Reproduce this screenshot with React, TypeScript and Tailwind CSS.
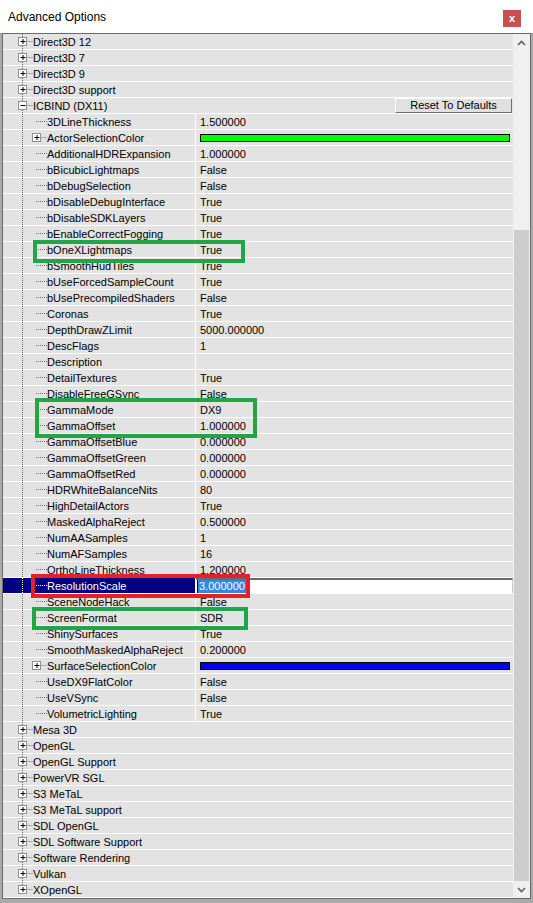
import React from "react";

type Item = {
  label: string;
  value?: string;
  swatch?: "green" | "blue";
  expandable?: boolean;
  selected?: boolean;
};

const before = ["Direct3D 12", "Direct3D 7", "Direct3D 9", "Direct3D support"];
const after = [
  "Mesa 3D",
  "OpenGL",
  "OpenGL Support",
  "PowerVR SGL",
  "S3 MeTaL",
  "S3 MeTaL support",
  "SDL OpenGL",
  "SDL Software Support",
  "Software Rendering",
  "Vulkan",
  "XOpenGL",
];

const props: Item[] = [
  { label: "3DLineThickness", value: "1.500000" },
  { label: "ActorSelectionColor", swatch: "green", expandable: true },
  { label: "AdditionalHDRExpansion", value: "1.000000" },
  { label: "bBicubicLightmaps", value: "False" },
  { label: "bDebugSelection", value: "False" },
  { label: "bDisableDebugInterface", value: "True" },
  { label: "bDisableSDKLayers", value: "True" },
  { label: "bEnableCorrectFogging", value: "True" },
  { label: "bOneXLightmaps", value: "True" },
  { label: "bSmoothHudTiles", value: "True" },
  { label: "bUseForcedSampleCount", value: "True" },
  { label: "bUsePrecompiledShaders", value: "False" },
  { label: "Coronas", value: "True" },
  { label: "DepthDrawZLimit", value: "5000.000000" },
  { label: "DescFlags", value: "1" },
  { label: "Description", value: "" },
  { label: "DetailTextures", value: "True" },
  { label: "DisableFreeGSync", value: "False" },
  { label: "GammaMode", value: "DX9" },
  { label: "GammaOffset", value: "1.000000" },
  { label: "GammaOffsetBlue", value: "0.000000" },
  { label: "GammaOffsetGreen", value: "0.000000" },
  { label: "GammaOffsetRed", value: "0.000000" },
  { label: "HDRWhiteBalanceNits", value: "80" },
  { label: "HighDetailActors", value: "True" },
  { label: "MaskedAlphaReject", value: "0.500000" },
  { label: "NumAASamples", value: "1" },
  { label: "NumAFSamples", value: "16" },
  { label: "OrthoLineThickness", value: "1.200000" },
  { label: "ResolutionScale", value: "3.000000", selected: true },
  { label: "SceneNodeHack", value: "False" },
  { label: "ScreenFormat", value: "SDR" },
  { label: "ShinySurfaces", value: "True" },
  { label: "SmoothMaskedAlphaReject", value: "0.200000" },
  { label: "SurfaceSelectionColor", swatch: "blue", expandable: true },
  { label: "UseDX9FlatColor", value: "False" },
  { label: "UseVSync", value: "False" },
  { label: "VolumetricLighting", value: "True" },
];

// little +/- box used by the tree
function Box({ x, open, dot }: { x: number; open?: boolean; dot: string }) {
  const cx = x + 4;
  return (
    <g>
      <rect x={x} y={3.5} width={8} height={8} fill="#fff" stroke="#919191" />
      <line x1={cx - 2} y1={7.5} x2={cx + 3} y2={7.5} stroke="#000" />
      {!open && <line x1={cx + 0.5} y1={5} x2={cx + 0.5} y2={10} stroke="#000" />}
      <line x1={x + 9} y1={7.5} x2={x + 14} y2={7.5} stroke={dot} strokeDasharray="1 1" />
    </g>
  );
}

function Glyph({
  level,
  box,
  last,
  selected,
}: {
  level: 0 | 1;
  box?: "plus" | "minus";
  last?: boolean;
  selected?: boolean;
}) {
  const dot = selected ? "#ffffff" : "#6e6e6e";
  if (level === 0) {
    return (
      <svg width={30} height={15} className="shrink-0">
        <line x1={19.5} y1={0} x2={19.5} y2={3} stroke={dot} strokeDasharray="1 1" />
        {!last && <line x1={19.5} y1={12} x2={19.5} y2={16} stroke={dot} strokeDasharray="1 1" />}
        <Box x={15.5} open={box === "minus"} dot={dot} />
      </svg>
    );
  }
  return (
    <svg width={44} height={15} className="shrink-0">
      <line x1={19.5} y1={0} x2={19.5} y2={16} stroke={dot} strokeDasharray="1 1" />
      {box ? (
        <Box x={29.5} dot={dot} />
      ) : (
        <line x1={33} y1={7.5} x2={44} y2={7.5} stroke={dot} strokeDasharray="1 1" />
      )}
    </svg>
  );
}

function GroupRow({ label, open, last, children }: { label: string; open?: boolean; last?: boolean; children?: React.ReactNode }) {
  return (
    <div className="flex h-4 items-center border-b border-white bg-[#e3e3e3]">
      <Glyph level={0} box={open ? "minus" : "plus"} last={last} />
      <span className="pt-px whitespace-nowrap">{label}</span>
      {children}
    </div>
  );
}

function PropRow({ item }: { item: Item }) {
  return (
    <div className="flex h-4 border-b border-white bg-[#e3e3e3]">
      <div
        className={`flex w-[193px] shrink-0 items-center border-r border-white ${
          item.selected ? "bg-[#000080] text-white" : ""
        }`}
      >
        <Glyph level={1} box={item.expandable ? "plus" : undefined} selected={item.selected} />
        <span className="pt-px whitespace-nowrap">{item.label}</span>
      </div>
      {item.selected ? (
        <div className="flex flex-1 items-center border-t-2 border-r border-t-[#6b6b6b] border-r-[#c9c9c9] bg-white pl-[1px]">
          <span className="border-l border-black bg-[#3088df] px-[1px] leading-[13px] text-white">{item.value}</span>
        </div>
      ) : (
        <div className="flex flex-1 items-center pl-1 pr-[3px]">
          {item.swatch === "green" && <div className="h-2 w-full border border-black bg-[#00ff00]" />}
          {item.swatch === "blue" && <div className="h-2 w-full border border-black bg-[#0000f0]" />}
          {!item.swatch && <span className="pt-px whitespace-nowrap">{item.value}</span>}
        </div>
      )}
    </div>
  );
}

function Chevron({ up }: { up?: boolean }) {
  return (
    <svg width={9} height={6} viewBox="0 0 9 6">
      <path
        d={up ? "M1 5 L4.5 1.5 L8 5" : "M1 1 L4.5 4.5 L8 1"}
        fill="none"
        stroke="#606060"
        strokeWidth={1.6}
      />
    </svg>
  );
}

export default function App() {
  return (
    <div className="flex h-[903px] w-[533px] flex-col bg-white font-['Liberation_Sans',Arial,sans-serif] text-black">
      {/* window caption */}
      <div className="flex h-[33px] shrink-0 items-center justify-between pl-2 pr-3">
        <span className="text-[12px]">Advanced Options</span>
        <div className="mb-[-3px] flex h-[17px] w-[18px] items-center justify-center bg-[#c75050] text-[11px] leading-none font-bold text-white">
          x
        </div>
      </div>

      {/* property tree */}
      <div className="flex flex-1 flex-col border-x-2 border-b-4 border-[#aaaaaa]">
        <div className="flex flex-1 border border-[#6b6b6b]">
          <div className="relative flex flex-1 flex-col text-[11px] leading-[15px]">
            {before.map((l) => (
              <GroupRow key={l} label={l} />
            ))}
            <GroupRow label="ICBIND (DX11)" open>
              <button className="mr-[1px] ml-auto h-[15px] w-[117px] border border-t-white border-l-white border-r-[#6f6f6f] border-b-[#6f6f6f] bg-[#e1e1e1] text-[11px] leading-[13px]">
                Reset To Defaults
              </button>
            </GroupRow>
            {props.map((p) => (
              <PropRow key={p.label} item={p} />
            ))}
            {after.map((l, i) => (
              <GroupRow key={l} label={l} last={i === after.length - 1} />
            ))}

            {/* highlight frames */}
            <div className="absolute top-[206px] left-[30px] h-[23px] w-[212px] border-4 border-[#22a547]" />
            <div className="absolute top-[364px] left-[32px] h-[40px] w-[222px] border-4 border-[#22a547]" />
            <div className="absolute top-[540px] left-[28px] h-[24px] w-[219px] border-4 border-[#e5202a]" />
            <div className="absolute top-[573px] left-[29px] h-[23px] w-[216px] border-4 border-[#22a547]" />
          </div>

          {/* scrollbar */}
          <div className="flex w-[17px] shrink-0 flex-col bg-[#f0f0f0]">
            <div className="flex h-[17px] items-center justify-center">
              <Chevron up />
            </div>
            <div className="flex flex-1 flex-col">
              <div className="h-[179px]" />
              <div className="mx-[1px] flex-1 bg-[#cdcdcd]" />
            </div>
            <div className="flex h-[17px] items-center justify-center">
              <Chevron />
            </div>
          </div>
        </div>
      </div>
    </div>
  );
}
